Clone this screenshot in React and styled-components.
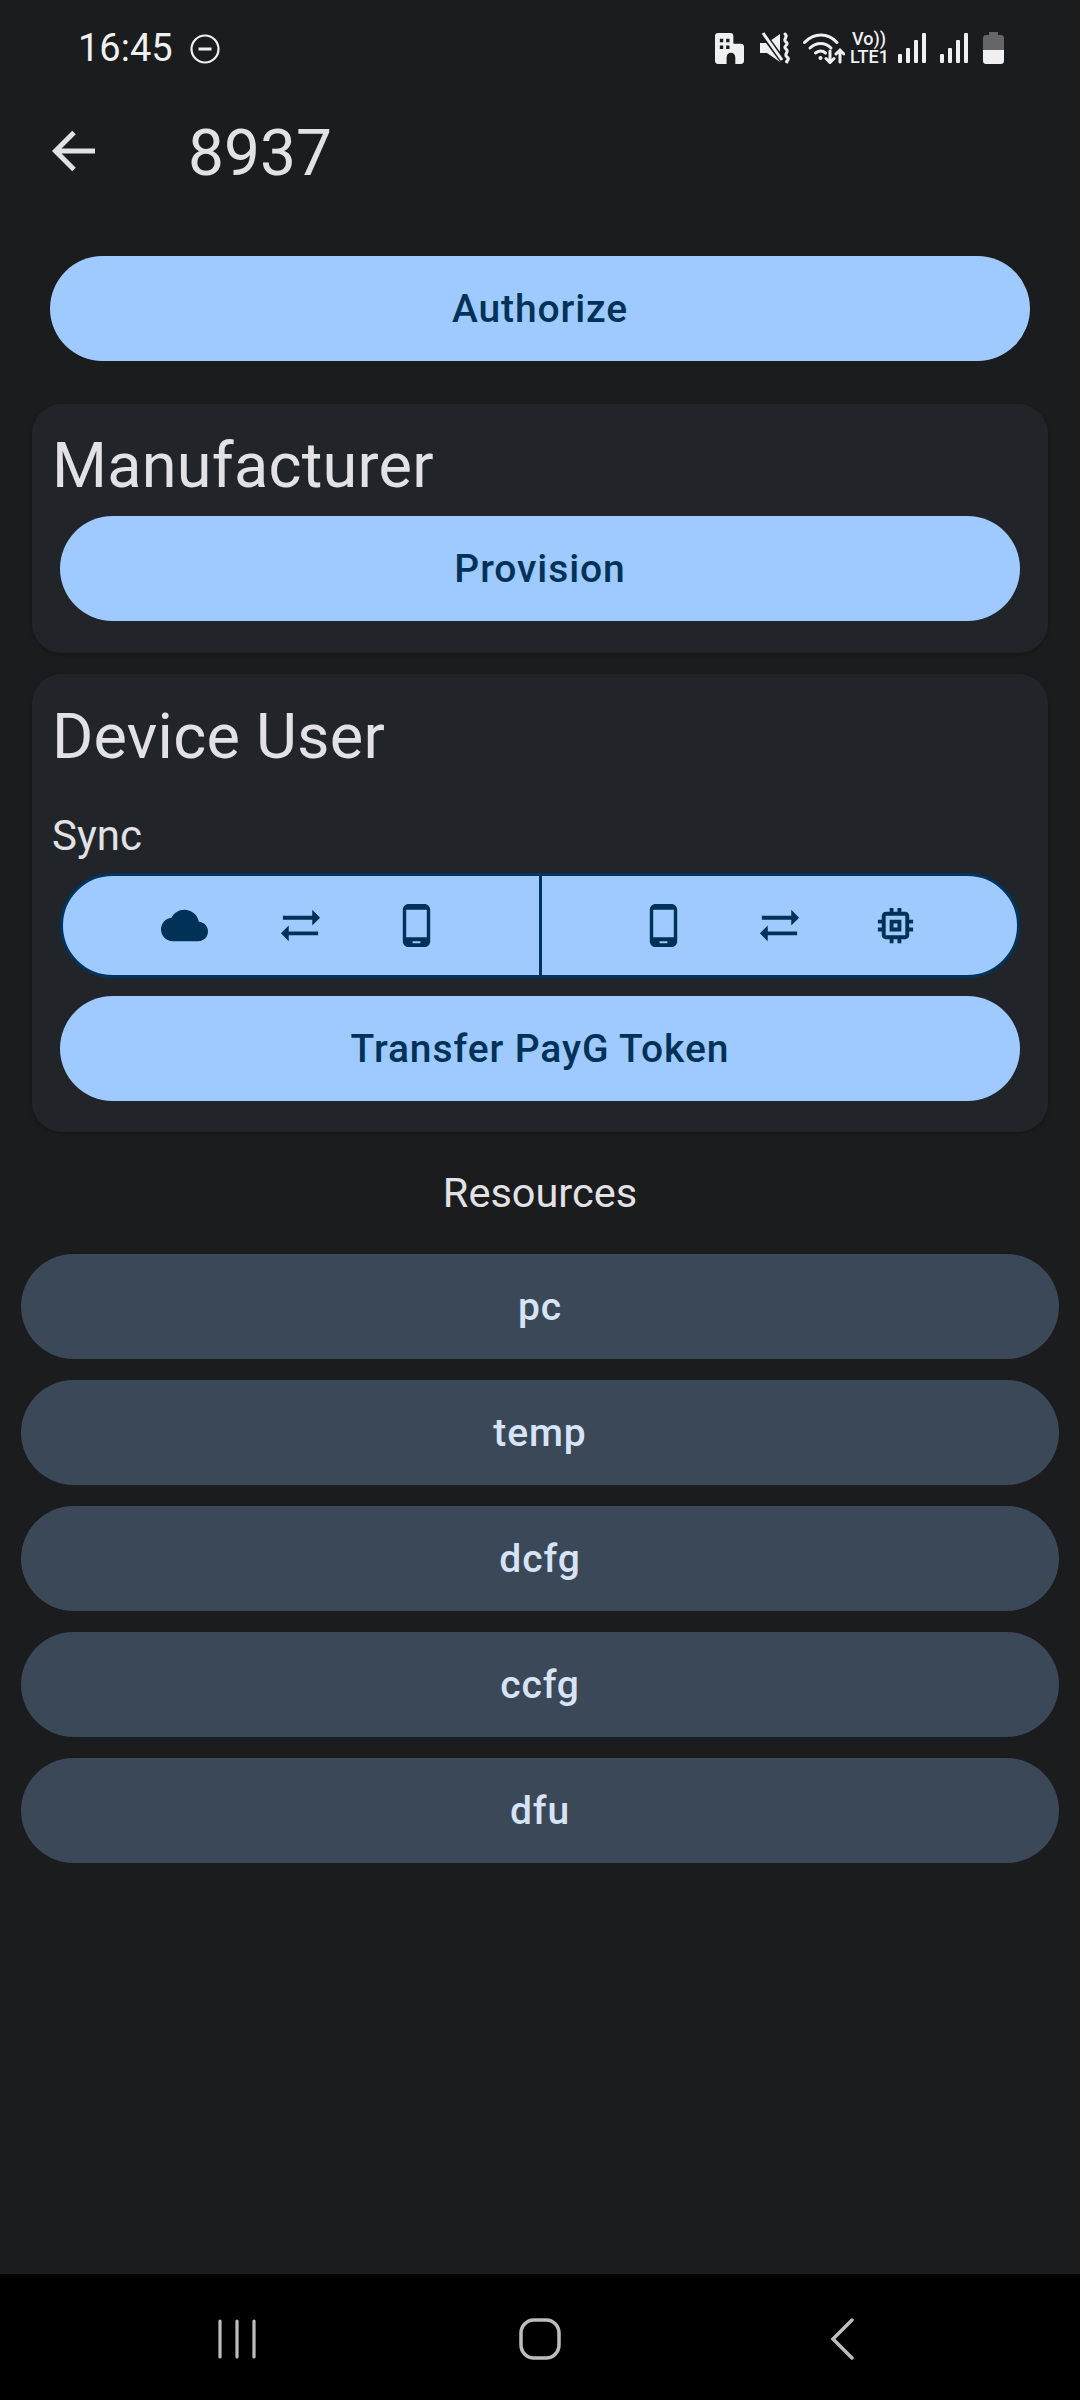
import React from 'react';
import styled, { createGlobalStyle } from 'styled-components';

const GlobalStyle = createGlobalStyle`
  html, body {
    margin: 0;
    padding: 0;
    background: #1a1c1e;
    font-family: Roboto, "Noto Sans", sans-serif;
  }
  * { box-sizing: border-box; }
`;

const Page = styled.div`
  width: 1080px;
  height: 2400px;
  display: flex;
  flex-direction: column;
  background: #1a1c1e;
  color: #e2e2e6;
  overflow: hidden;
`;

const StatusBar = styled.div`
  height: 96px;
  flex: none;
  display: flex;
  align-items: center;
  padding: 0 76px 0 78px;
  color: #f0f0f0;
`;

const Time = styled.span`
  font-size: 38px;
  line-height: 96px;
  margin-right: 17px;
`;

const DndSlot = styled.div`
  display: flex;
  padding-top: 2px;
`;

const StatusIcons = styled.div`
  margin-left: auto;
  display: flex;
  align-items: center;
`;

const StatusSlot = styled.div`
  display: flex;
  margin-left: ${(p) => p.$left || 0}px;
`;

const Volte = styled.div`
  width: 38px;
  margin-left: 5px;
  font-size: 18px;
  font-weight: 500;
  line-height: 18px;
  text-align: center;
  white-space: nowrap;
`;

const Header = styled.div`
  height: 110px;
  flex: none;
  display: flex;
  align-items: center;
  padding-left: 51px;
`;

const BackButton = styled.div`
  width: 137px;
  display: flex;
  align-items: center;
`;

const PageTitle = styled.div`
  font-size: 64px;
  line-height: 76px;
  padding-top: 5px;
`;

const Pill = styled.div`
  height: 105px;
  flex: none;
  margin: ${(p) => p.$margin || '0'};
  border-radius: 53px;
  display: flex;
  align-items: center;
  justify-content: center;
  font-size: 39px;
  font-weight: 500;
  letter-spacing: 0.9px;
  background: ${(p) => (p.$tonal ? '#3b4858' : '#9ecaff')};
  color: ${(p) => (p.$tonal ? '#d7e3f7' : '#003258')};
`;

const Card = styled.section`
  flex: none;
  margin: ${(p) => p.$margin};
  padding: ${(p) => p.$top}px 0 ${(p) => p.$bottom}px;
  background: #21252a;
  border-radius: 30px;
  box-shadow: 0 2px 4px rgba(0, 0, 0, 0.2);
`;

const CardTitle = styled.h2`
  margin: 0 0 ${(p) => p.$gap}px 20px;
  font-size: 63px;
  font-weight: 400;
  line-height: 75px;
  letter-spacing: 0.25px;
`;

const SubTitle = styled.div`
  margin: 0 0 14px 20px;
  font-size: 42px;
  line-height: 46px;
`;

const SyncGroup = styled.div`
  height: 105px;
  margin: 0 28px 18px;
  display: grid;
  grid-template-columns: 475.5px 1fr;
  background: #9ecaff;
  border: 3px solid #00345c;
  border-radius: 53px;
  overflow: hidden;
`;

const SyncSegment = styled.div`
  display: flex;
  align-items: center;
  justify-content: center;
  gap: 69px;
  color: #003258;
  & + & {
    border-left: 3px solid #00345c;
  }
`;

const ResourcesLabel = styled.div`
  margin: 38px 0 38px;
  font-size: 41.5px;
  line-height: 46px;
  text-align: center;
`;

const ResourceList = styled.div`
  display: flex;
  flex-direction: column;
  gap: 21px;
  padding: 0 21px;
`;

const NavBar = styled.nav`
  margin-top: auto;
  height: 126px;
  flex: none;
  padding-top: 3px;
  background: #000;
  display: grid;
  grid-template-columns: 474px 132px 1fr;
  align-items: center;
  color: #bdbdbd;
`;

const NavCell = styled.div`
  display: flex;
  justify-content: ${(p) => p.$justify};
  padding: ${(p) => p.$padding || '0'};
`;

const Icon = ({ d, size = 47 }) => (
  <svg width={size} height={size} viewBox="0 0 24 24" fill="currentColor">
    <path d={d} />
  </svg>
);

const CLOUD = 'M19.35 10.04C18.67 6.59 15.64 4 12 4 9.11 4 6.6 5.64 5.35 8.04 2.34 8.36 0 10.91 0 14c0 3.31 2.69 6 6 6h13c2.76 0 5-2.24 5-5 0-2.64-2.05-4.78-4.65-4.96z';
const SWAP = 'M18 12l4-4-4-4v3H3v2h15zM6 12l-4 4 4 4v-3h15v-2H6z';
const PHONE = 'M16 1H8C6.34 1 5 2.34 5 4v16c0 1.66 1.34 3 3 3h8c1.66 0 3-1.34 3-3V4c0-1.66-1.34-3-3-3zm-2 20h-4v-1h4v1zm3.25-3H6.75V4h10.5v14z';
const CHIP = 'M15 9H9v6h6V9zm-2 4h-2v-2h2v2zm8-2V9h-2V7c0-1.1-.9-2-2-2h-2V3h-2v2h-2V3H9v2H7c-1.1 0-2 .9-2 2v2H3v2h2v2H3v2h2v2c0 1.1.9 2 2 2h2v2h2v-2h2v2h2v-2h2c1.1 0 2-.9 2-2v-2h2v-2h-2v-2h2zm-4 6H7V7h10v10z';

const DndIcon = () => (
  <svg width="30" height="30" viewBox="0 0 30 30" fill="none" stroke="currentColor">
    <circle cx="15" cy="15" r="13.5" strokeWidth="2.2" />
    <path d="M8.5 15h13" strokeWidth="3" />
  </svg>
);

const BuildingIcon = () => (
  <svg width="29" height="31" viewBox="0 0 30 32" fill="currentColor">
    <path
      fillRule="evenodd"
      d="M3 0h13c1.7 0 3 1.3 3 3v8h8c1.7 0 3 1.3 3 3v15c0 1.7-1.3 3-3 3h-6v-7c0-2.500-2-4.500-4.500-4.500S12 22.500 12 25v7H3c-1.700 0-3-1.300-3-3V3c0-1.700 1.300-3 3-3zM5 6v3.500h3.500V6zm6.500 0v3.500H15V6zM5 13v3.500h3.500V13zm6.500 0v3.500H15V13z"
    />
  </svg>
);

const MuteIcon = () => (
  <svg width="30" height="32" viewBox="0 0 30 32">
    <path fill="currentColor" d="M0 11h7l13-9v28L7 21H0z" />
    <path fill="none" stroke="#1a1c1e" strokeWidth="6" d="M1 -1l22 30" />
    <path fill="none" stroke="currentColor" strokeWidth="3" d="M3 1l19 27" />
    <path fill="none" stroke="currentColor" strokeWidth="3" strokeLinecap="round" d="M25 2c4 3-3 5 1 8s-4 4 0 7-3 5 1 8-2 4 0 5" />
  </svg>
);

const WifiIcon = () => (
  <svg width="42" height="31" viewBox="0 0 42 31" fill="none" stroke="currentColor" strokeWidth="3" strokeLinecap="round">
    <path d="M1.500 9.500C11 -.5 25 -.5 34 9.500" />
    <path d="M7 15c6.500-6 15-6 21 0" />
    <path d="M12.500 20c3.500-2.500 7-2.500 10 0" />
    <circle cx="17.500" cy="25" r="2" fill="currentColor" strokeWidth="0" />
    <path d="M27 18v11M23 25.500l4 4 4-4M37 29V17M33 21l4-4 4 4" />
  </svg>
);

const SignalIcon = () => (
  <svg width="28" height="30" viewBox="0 0 28 30" fill="currentColor">
    <rect x="0" y="21" width="4" height="9" rx="1" />
    <rect x="8" y="15" width="4" height="15" rx="1" />
    <rect x="16" y="7" width="4" height="23" rx="1" />
    <rect x="24" y="0" width="4" height="30" rx="1" />
  </svg>
);

const BatteryIcon = () => (
  <svg width="21" height="32" viewBox="0 0 21 32">
    <path fill="#666" d="M6 0h9v3h3c1.700 0 3 1.300 3 3v12H0V6c0-1.700 1.300-3 3-3h3z" />
    <path fill="#f0f0f0" d="M0 18h21v11c0 1.700-1.300 3-3 3H3c-1.700 0-3-1.300-3-3z" />
  </svg>
);

const resources = ['pc', 'temp', 'dcfg', 'ccfg', 'dfu'];

export default function App() {
  return (
    <Page>
      <GlobalStyle />
      <StatusBar>
        <Time>16:45</Time>
        <DndSlot>
          <DndIcon />
        </DndSlot>
        <StatusIcons>
          <StatusSlot>
            <BuildingIcon />
          </StatusSlot>
          <StatusSlot $left={16}>
            <MuteIcon />
          </StatusSlot>
          <StatusSlot $left={13}>
            <WifiIcon />
          </StatusSlot>
          <Volte>
            Vo))
            <br />
            LTE1
          </Volte>
          <StatusSlot $left={10}>
            <SignalIcon />
          </StatusSlot>
          <StatusSlot $left={14}>
            <SignalIcon />
          </StatusSlot>
          <StatusSlot $left={15}>
            <BatteryIcon />
          </StatusSlot>
        </StatusIcons>
      </StatusBar>

      <Header>
        <BackButton>
          <svg width="44" height="44" viewBox="0 0 44 44" fill="none" stroke="#e2e2e6" strokeWidth="5">
            <path d="M44 22H5M23 3.500L4.500 22 23 40.500" />
          </svg>
        </BackButton>
        <PageTitle>8937</PageTitle>
      </Header>

      <Pill $margin="50px 50px 43px">Authorize</Pill>

      <Card $margin="0 32px 21px" $top={24} $bottom={32}>
        <CardTitle $gap={13}>Manufacturer</CardTitle>
        <Pill $margin="0 28px">Provision</Pill>
      </Card>

      <Card $margin="0 32px" $top={25} $bottom={31}>
        <CardTitle $gap={39}>Device User</CardTitle>
        <SubTitle>Sync</SubTitle>
        <SyncGroup>
          <SyncSegment>
            <Icon d={CLOUD} />
            <Icon d={SWAP} />
            <Icon d={PHONE} />
          </SyncSegment>
          <SyncSegment>
            <Icon d={PHONE} />
            <Icon d={SWAP} />
            <Icon d={CHIP} />
          </SyncSegment>
        </SyncGroup>
        <Pill $margin="0 28px">Transfer PayG Token</Pill>
      </Card>

      <ResourcesLabel>Resources</ResourcesLabel>
      <ResourceList>
        {resources.map((name) => (
          <Pill key={name} $tonal>
            {name}
          </Pill>
        ))}
      </ResourceList>

      <NavBar>
        <NavCell $justify="flex-end" $padding="0 217px 0 0">
          <svg width="40" height="40" viewBox="0 0 40 40" stroke="currentColor" strokeWidth="3.200" strokeLinecap="round">
            <path d="M3 2v36M20 2v36M37 2v36" />
          </svg>
        </NavCell>
        <NavCell $justify="center">
          <svg width="42" height="42" viewBox="0 0 42 42" fill="none" stroke="currentColor" strokeWidth="3.500">
            <rect x="2" y="2" width="38" height="38" rx="13" />
          </svg>
        </NavCell>
        <NavCell $justify="flex-start" $padding="0 0 0 224px">
          <svg width="24" height="42" viewBox="0 0 24 42" fill="none" stroke="currentColor" strokeWidth="3.500" strokeLinecap="round">
            <path d="M22 2L3 21l19 19" />
          </svg>
        </NavCell>
      </NavBar>
    </Page>
  );
}
